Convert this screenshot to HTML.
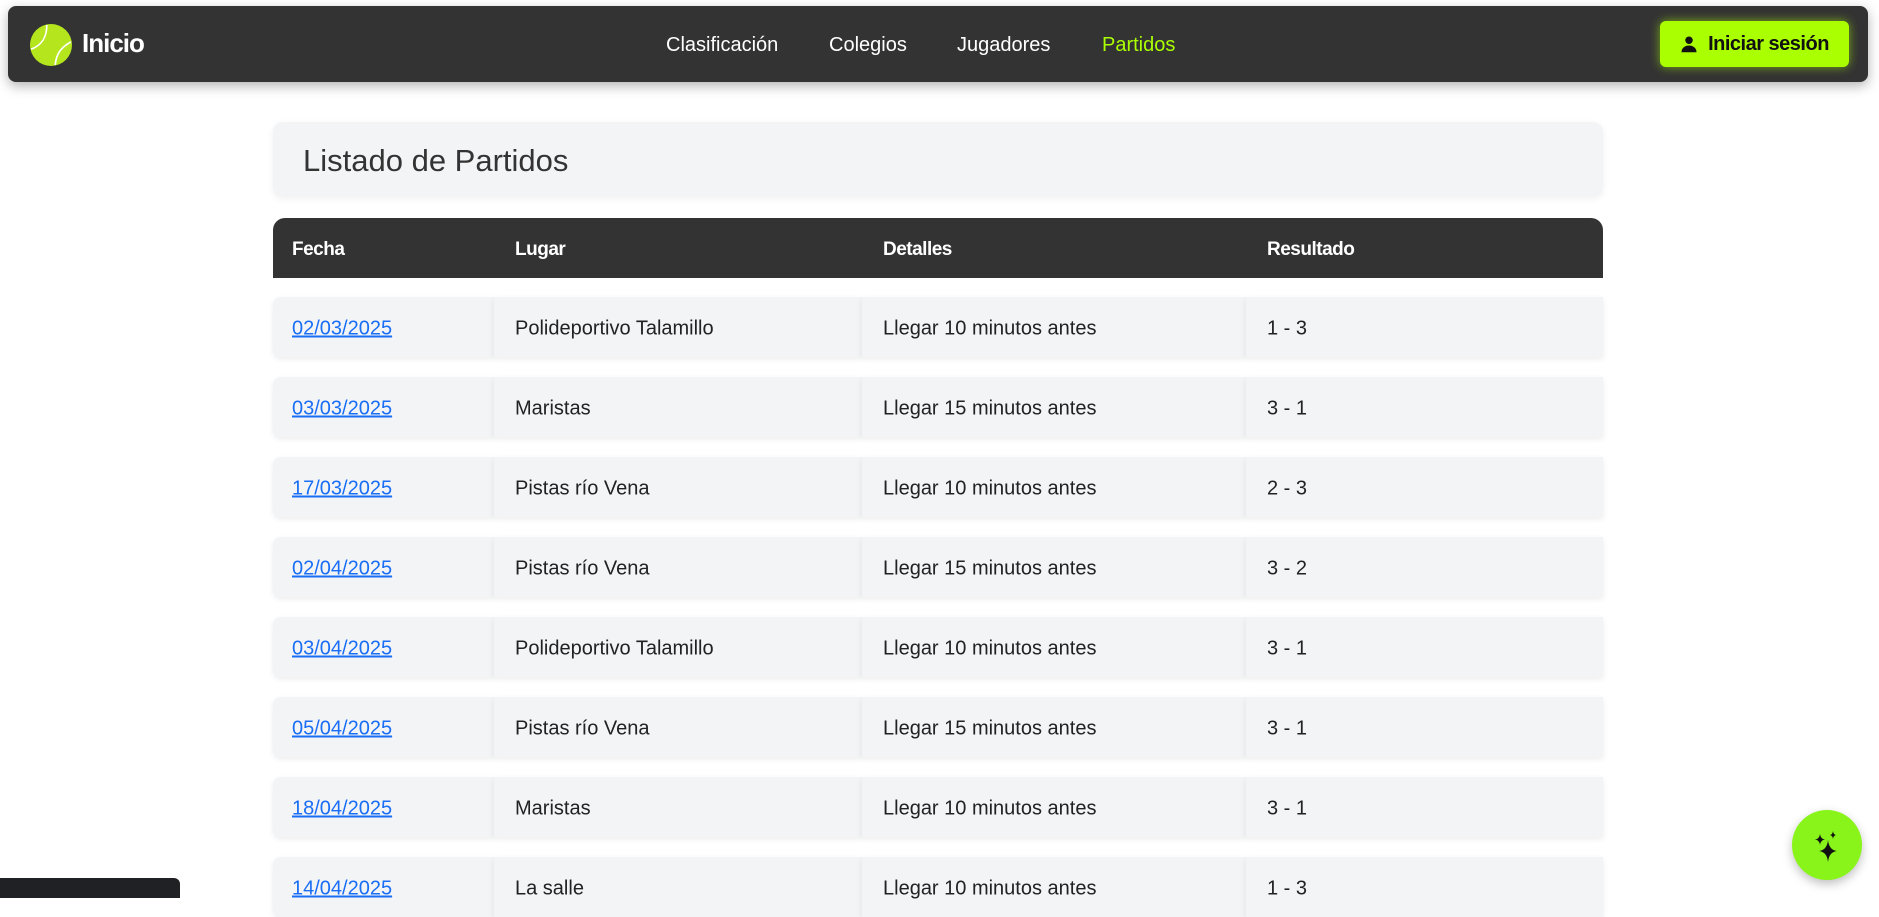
<!DOCTYPE html>
<html><head><meta charset="utf-8"><style>
*{box-sizing:border-box;margin:0;padding:0}
body{width:1879px;height:888px;overflow:hidden;background:#fff;font-family:"Liberation Sans",Arial,sans-serif;position:relative}
.nav{position:absolute;left:8px;top:6px;width:1860px;height:76px;background:#333;border-radius:8px;box-shadow:0 4px 12px rgba(0,0,0,.3)}
.logo{position:absolute;left:22px;top:18px}
.brand{position:absolute;left:74px;top:22px;color:#fff;font-weight:bold;font-size:26px;letter-spacing:-1px}
.links a{position:absolute;top:28px;color:#fff;font-size:20px;text-decoration:none}
.btn{position:absolute;left:1652px;top:15px;width:189px;height:46px;background:#aaff00;border-radius:6px;box-shadow:0 0 10px rgba(170,255,0,.6);color:#111;font-weight:bold;font-size:20px;letter-spacing:-.5px;display:flex;align-items:center;justify-content:center;gap:10px}
.card{position:absolute;left:273px;top:122px;width:1330px;height:75px;background:#f3f4f6;border-radius:10px;box-shadow:0 2px 8px rgba(0,0,0,.06)}
.card h1{position:absolute;left:30px;top:21px;font-size:31px;font-weight:normal;color:#333}
.thead{position:absolute;left:273px;top:218px;width:1330px;height:60px;background:#333;border-radius:12px 12px 0 0;color:#fff;font-weight:bold;font-size:19px;letter-spacing:-.5px}
.thead span,.row span{position:absolute;top:50%;transform:translateY(-50%)}
.thead span{margin-top:2px}
.row{position:absolute;left:273px;width:1330px;height:60px;font-size:20px;color:#222}
.row span{margin-top:2px}
.row .c{position:absolute;top:0;height:60px;background:#f3f4f6;box-shadow:0 2px 6px rgba(0,0,0,.08)}
.row a{color:#1a6ef5;text-decoration:underline}
.fab{position:absolute;left:1792px;top:810px;width:70px;height:70px;border-radius:50%;background:#88f41a;box-shadow:0 4px 10px rgba(0,0,0,.25)}
.tip{position:absolute;left:0;top:878px;width:180px;height:20px;background:#202124;border-radius:0 6px 0 0}
</style></head><body>
<div class="nav">
<svg class="logo" width="42" height="42" viewBox="0 0 40 40"><circle cx="20" cy="20" r="20" fill="#b5e61d"/><path d="M1 24 C12 20 16 12 16 1" stroke="#fff" stroke-width="1.6" fill="none"/><path d="M24 39 C25 28 30 22 39 17" stroke="#fff" stroke-width="1.6" fill="none"/></svg>
<div class="brand">Inicio</div>
<div class="links"><a style="left:658px">Clasificación</a><a style="left:821px">Colegios</a><a style="left:949px">Jugadores</a><a style="left:1094px;color:#aaff00">Partidos</a></div>
<div class="btn"><svg width="18" height="18" viewBox="0 0 24 24"><circle cx="12" cy="7" r="5" fill="#111"/><path d="M2 23c0-6 5-9 10-9s10 3 10 9z" fill="#111"/></svg>Iniciar sesión</div>
</div>
<div class="card"><h1>Listado de Partidos</h1></div>
<div class="thead"><span style="left:19px">Fecha</span><span style="left:242px">Lugar</span><span style="left:610px">Detalles</span><span style="left:994px">Resultado</span></div>
<div id="rows"></div>
<script>
var d=[["02/03/2025","Polideportivo Talamillo","Llegar 10 minutos antes","1 - 3"],["03/03/2025","Maristas","Llegar 15 minutos antes","3 - 1"],["17/03/2025","Pistas río Vena","Llegar 10 minutos antes","2 - 3"],["02/04/2025","Pistas río Vena","Llegar 15 minutos antes","3 - 2"],["03/04/2025","Polideportivo Talamillo","Llegar 10 minutos antes","3 - 1"],["05/04/2025","Pistas río Vena","Llegar 15 minutos antes","3 - 1"],["18/04/2025","Maristas","Llegar 10 minutos antes","3 - 1"],["14/04/2025","La salle","Llegar 10 minutos antes","1 - 3"]];
var h="";d.forEach(function(r,i){var t=297+i*80;h+='<div class="row" style="top:'+t+'px"><div class="c" style="left:0;width:221px;border-radius:8px 0 0 8px"><span style="left:19px"><a>'+r[0]+'</a></span></div><div class="c" style="left:221px;width:368px"><span style="left:21px">'+r[1]+'</span></div><div class="c" style="left:589px;width:384px"><span style="left:21px">'+r[2]+'</span></div><div class="c" style="left:973px;width:357px"><span style="left:21px">'+r[3]+'</span></div></div>';});
document.getElementById("rows").innerHTML=h;
</script>
<div class="tip"></div>
<div class="fab"><svg width="70" height="70" viewBox="0 0 70 70"><path d="M36 30 Q37 40 45 41 Q37 42 36 52 Q35 42 27 41 Q35 40 36 30z" fill="#111"/><path d="M28 24 Q28.6 29 33 29.5 Q28.6 30 28 35 Q27.4 30 23 29.5 Q27.4 29 28 24z" fill="#111"/><path d="M41 21 Q41.4 24.5 44 25 Q41.4 25.5 41 29 Q40.6 25.5 38 25 Q40.6 24.5 41 21z" fill="#111"/></svg></div>
</body></html>
